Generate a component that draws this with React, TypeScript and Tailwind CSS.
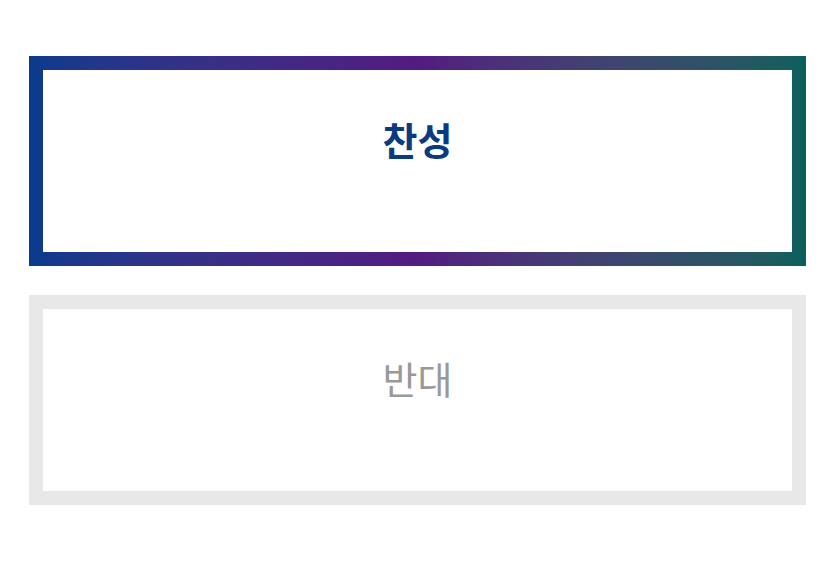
import { useState } from "react";

type Choice = "yes" | "no";

const OPTIONS: { id: Choice; label: string }[] = [
  { id: "yes", label: "찬성" },
  { id: "no", label: "반대" },
];

export default function App() {
  const [selected, setSelected] = useState<Choice>("yes");

  return (
    <div
      className="flex min-h-screen flex-col gap-[29px] bg-white px-[29px] pt-[56px]"
      style={{ fontFamily: '"Noto Sans CJK KR", "Noto Sans", sans-serif' }}
    >
      {OPTIONS.map((opt) => {
        const active = selected === opt.id;
        return (
          <button
            key={opt.id}
            type="button"
            onClick={() => setSelected(opt.id)}
            className={
              active
                ? "block h-[210px] w-full bg-linear-to-r from-[#073b8c] via-[#521b80] to-[#0a5f5c] p-[14px]"
                : "block h-[210px] w-full bg-[#e8e8e8] p-[14px]"
            }
          >
            <div className="flex h-full w-full justify-center bg-white pt-[44px]">
              <span
                className={
                  active
                    ? "text-[38px] leading-[50px] font-bold text-[#0a3a80]"
                    : "text-[38px] leading-[50px] font-normal text-[#999999]"
                }
              >
                {opt.label}
              </span>
            </div>
          </button>
        );
      })}
    </div>
  );
}
